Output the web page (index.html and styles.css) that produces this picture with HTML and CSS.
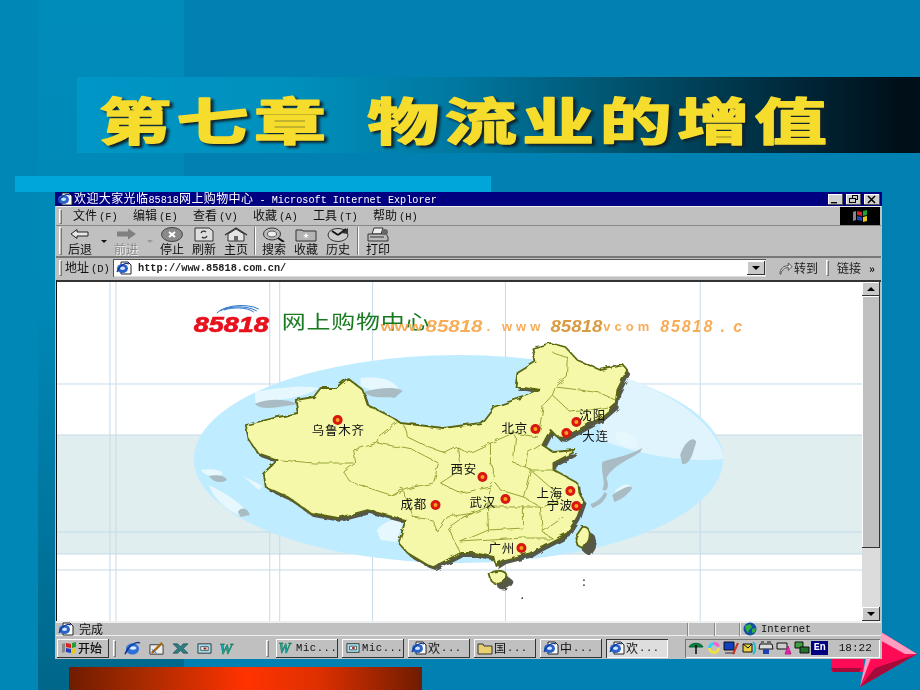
FILE: index.html
```html
<!DOCTYPE html>
<html lang="zh-CN">
<head>
<meta charset="utf-8">
<title>第七章 物流业的增值</title>
<link rel="stylesheet" href="styles.css">
</head>
<body>
<svg class="defs" width="0" height="0" aria-hidden="true">
  <defs>
    <symbol id="pageie" viewBox="0 0 16 14">
      <path d="M5 1h7l3 3v9H5z" fill="#fff" stroke="#222" stroke-width="1"/>
      <ellipse cx="6.500" cy="7.500" rx="5.500" ry="4.500" fill="#2a62c8"/>
      <ellipse cx="6.500" cy="7.200" rx="2.600" ry="1.700" fill="#cfe4ff"/>
      <path d="M1 11C3 5 9 1 13 3" fill="none" stroke="#123a90" stroke-width="1.200"/>
    </symbol>
    <symbol id="ie" viewBox="0 0 18 16">
      <ellipse cx="9" cy="8.500" rx="7" ry="6" fill="#2f6fd8"/>
      <ellipse cx="9.500" cy="7.500" rx="3.600" ry="1.800" fill="#d8ecff"/>
      <path d="M1 14C4 6 12 0 17 2" fill="none" stroke="#123a90" stroke-width="1.600"/>
    </symbol>
    <symbol id="winflag" viewBox="0 0 16 14">
      <path d="M1 3l3-1v9l-3 1z" fill="#888"/>
      <path d="M5 2l5 1v4L5 6z" fill="#d82020"/>
      <path d="M11 2l4-1v5l-4 1z" fill="#20a030"/>
      <path d="M5 7l5 1v4l-5-1z" fill="#2040c0"/>
      <path d="M11 8l4-1v5l-4 1z" fill="#e8c820"/>
    </symbol>
    <symbol id="globe" viewBox="0 0 16 14">
      <circle cx="8" cy="7" r="6.500" fill="#1050a0"/>
      <path d="M3 4l5-2 2 3-3 3-1 3-2-3zM10 7l4-1-1 4-3 1z" fill="#30b040"/>
    </symbol>
    <filter id="wiggle" x="-5%" y="-5%" width="110%" height="110%">
      <feTurbulence type="fractalNoise" baseFrequency="0.11" numOctaves="2" seed="4" result="n"/>
      <feDisplacementMap in="SourceGraphic" in2="n" scale="5"/>
    </filter>
  </defs>
</svg>

<main class="slide">
  <svg class="arrow" viewBox="0 0 90 60" aria-hidden="true">
    <path class="ar-main" d="M0 28H32V42H0z"/>
    <path class="ar-dark" d="M2 42H28L31 38H0z"/>
    <path class="ar-light" d="M29 57L35 28H42z"/>
    <path class="ar-main" d="M40 28L52 3L86 24L29 57z"/>
    <path class="ar-light" d="M50 2L86 24L74 24L45 8z"/>
    <path class="ar-dark" d="M86 24L29 57L44 38z"/>
  </svg>

  <header class="band">
    <h1 class="chapter">
      <svg class="chapter-svg" viewBox="0 0 843 76"><text class="chapter-text" transform="translate(22 63) scale(1 .7)">第七章 物流业的增值</text></svg>
    </h1>
  </header>
  <div class="strip"></div>

  <section class="win">
    <div class="titlebar">
      <svg class="ti"><use href="#pageie"/></svg>
      <span class="ttext">欢迎大家光临<span class="lat">85818</span>网上购物中心<span class="lat"> - Microsoft Internet Explorer</span></span>
      <div class="wbtns">
        <span class="wbtn"><svg viewBox="0 0 15 11"><path d="M3 8h6v1.400H3z"/></svg></span>
        <span class="wbtn"><svg viewBox="0 0 15 11"><path d="M6 1h6v5h-2v3H3V4h3zM7 2v2h3v1h1V2zM4 5v3h5V5z" fill-rule="evenodd"/></svg></span>
        <span class="wbtn wbtn-x"><svg viewBox="0 0 15 11"><path d="M4 2l7 7M11 2l-7 7" stroke="#000" stroke-width="1.600"/></svg></span>
      </div>
    </div>

    <div class="menubar">
      <span class="grip"></span>
      <nav class="menu">
        <span class="mi">文件<span class="key">(F)</span></span>
        <span class="mi">编辑<span class="key">(E)</span></span>
        <span class="mi">查看<span class="key">(V)</span></span>
        <span class="mi">收藏<span class="key">(A)</span></span>
        <span class="mi">工具<span class="key">(T)</span></span>
        <span class="mi">帮助<span class="key">(H)</span></span>
      </nav>
      <span class="flagbox"><svg class="flag"><use href="#winflag"/></svg></span>
    </div>

    <div class="toolbar">
      <span class="grip grip-tall"></span>
      <div class="tb tb-back">
        <svg viewBox="0 0 24 14"><path d="M9 2L3 6.500 9 11V8.500h11v-4H9z" fill="#e8e8e8" stroke="#222"/></svg>
        <span>后退</span>
      </div>
      <span class="drop"></span>
      <div class="tb tb-off">
        <svg viewBox="0 0 24 14"><path d="M14 1l8 5.500-8 5.500V9H3V4h11z" fill="#808080"/></svg>
        <span>前进</span>
      </div>
      <span class="drop drop-off"></span>
      <div class="tb">
        <svg viewBox="0 0 24 15"><ellipse cx="12" cy="7.500" rx="10.500" ry="7" fill="#8a8a8a" stroke="#444"/><path d="M9 5l6 5M15 5l-6 5" stroke="#fff" stroke-width="2"/></svg>
        <span>停止</span>
      </div>
      <div class="tb">
        <svg viewBox="0 0 24 15"><path d="M3 1h14l4 3v10H3z" fill="#ddd" stroke="#333"/><path d="M9 6a3 3 0 0 1 5-1M15 9a3 3 0 0 1-5 1" fill="none" stroke="#333" stroke-width="1.300"/></svg>
        <span>刷新</span>
      </div>
      <div class="tb">
        <svg viewBox="0 0 24 15"><path d="M1 8L12 1l11 7" fill="none" stroke="#333" stroke-width="1.400"/><path d="M4 7l8-5 8 5v7H4z" fill="#e4e4e4" stroke="#333"/><path d="M10 9h4v5h-4z" fill="#666"/></svg>
        <span>主页</span>
      </div>
      <span class="tsep"></span>
      <div class="tb">
        <svg viewBox="0 0 24 15"><ellipse cx="10" cy="7" rx="8.500" ry="6" fill="#bbb" stroke="#333"/><ellipse cx="10" cy="7" rx="4.500" ry="3" fill="#eee" stroke="#555"/><path d="M16 11l6 4" stroke="#111" stroke-width="2"/></svg>
        <span>搜索</span>
      </div>
      <div class="tb">
        <svg viewBox="0 0 24 15"><path d="M2 3h6l1 1h13v10H2z" fill="#b4b4b4" stroke="#333"/><path d="M12 6l1 2h2l-2 1.300.700 2-1.700-1.200-1.700 1.200.700-2-2-1.300h2z" fill="#fff"/></svg>
        <span>收藏</span>
      </div>
      <div class="tb">
        <svg viewBox="0 0 24 15"><ellipse cx="12" cy="8" rx="10" ry="6.500" fill="#ccc" stroke="#333"/><path d="M12 8L20 2M12 8L6 4" stroke="#111" stroke-width="1.800"/><path d="M15 6l7-5v6z" fill="#333"/></svg>
        <span>历史</span>
      </div>
      <span class="tsep tsep-wide"></span>
      <div class="tb">
        <svg viewBox="0 0 24 15"><path d="M8 1h9l-2 6H6z" fill="#eee" stroke="#333"/><path d="M2 7h18l2 3v4H2z" fill="#bbb" stroke="#333"/><path d="M4 10h14" stroke="#333"/><circle cx="19" cy="5" r="3" fill="#666"/></svg>
        <span>打印</span>
      </div>
    </div>

    <div class="addr">
      <span class="grip grip-addr"></span>
      <span class="addr-label">地址<span class="key">(D)</span></span>
      <div class="field">
        <svg class="ti"><use href="#pageie"/></svg>
        <span class="url">http://www.85818.com.cn/</span>
        <span class="combo"><i class="tri"></i></span>
      </div>
      <span class="go">
        <svg viewBox="0 0 16 14"><path d="M2 13C2 7 6 4 11 4V1l4 4-4 4V6C7 6 4 8 3 13z" fill="#ddd" stroke="#333" stroke-width=".8"/></svg>
        <span>转到</span>
      </span>
      <span class="grip grip-addr"></span>
      <span class="links">链接</span>
      <span class="more">»</span>
    </div>

    <div class="content">
      <div class="page">
        <svg class="map" viewBox="56 282 806 339" preserveAspectRatio="none" role="img" aria-label="全国网点地图">
          <rect class="stripe" x="56" y="435" width="806" height="119"/>
          <g class="grid">
            <path d="M109 282V621M115 282V621M269 282V621M279 282V621M372 282V621M505 282V621M700 282V621"/>
            <path d="M56 384H862M56 435H862M56 532H862M56 554H862M56 570H862"/>
          </g>
          <ellipse class="sea" cx="458" cy="459" rx="265" ry="104"/>
          <path class="sea-pale" d="M600 372C670 385 722 430 723 459C690 462 650 458 600 440z"/>
          <g class="cloud">
            <path d="M254 392C275 388 300 385 318 388C310 395 285 400 255 403zM360 378C385 376 395 382 400 392C392 398 375 392 360 386z"/>
            <path d="M200 470C210 468 222 470 222 474C215 478 205 477 200 470zM208 485C222 492 245 505 248 515C240 520 215 505 208 485zM242 476L262 486L258 490z"/>
            <path d="M376 530C385 520 395 518 402 522L396 542L380 540z"/>
            <path d="M615 432C630 430 640 440 636 448C625 450 615 442 615 432zM615 490C625 482 635 482 628 494C620 500 615 498 615 490z"/>
          </g>
          <g class="land">
            <path d="M254 404C268 398 285 399 298 404L285 406C270 408 262 410 254 404z"/>
            <path d="M363 392C378 388 396 386 402 391L394 398C385 396 372 400 363 392z"/>
            <path d="M208 476C215 474 226 476 226 480C220 484 212 482 208 476zM237 512C242 505 248 510 249 515L240 517z"/>
            <path d="M602 462C612 458 628 456 642 448L640 452C628 460 612 466 606 478C610 488 606 492 602 490C606 482 600 472 602 462zM604 492L607 494C604 502 598 506 592 508L590 504C596 502 602 498 604 492z"/>
            <path d="M612 495C622 488 630 484 632 488C628 495 620 500 614 502z"/>
            <path d="M680 455C685 440 694 436 696 442C692 455 690 465 682 464z"/>
          </g>

          <g class="china">
            <path class="cn-shadow" d="M347 378L362 390L367 405L393 418L400 423L443 428L480 423L483 420L493 407L523 397L540 390L523 387L515 387L517 373L535 362L532 348L550 343L565 347L577 360L600 370L623 365L627 370L617 390L615 405L600 418L583 427L563 438L557 437L550 430L542 445L553 452L575 450L572 453L553 463L553 470L577 483L578 492L583 500L577 517L567 533L540 547L530 553L503 560L495 565L493 557L473 553L460 553L433 567L427 565L407 553L398 543L405 520L393 517L367 510L337 518L310 513L287 497L265 487L263 473L277 460L257 453L248 440L245 425L273 418L297 413L295 400L313 397L320 388L335 388z"/>
            <path class="cn" d="M347 378L362 390L367 405L393 418L400 423L443 428L480 423L483 420L493 407L523 397L540 390L523 387L515 387L517 373L535 362L532 348L550 343L565 347L577 360L600 370L623 365L627 370L617 390L615 405L600 418L583 427L563 438L557 437L550 430L542 445L553 452L575 450L572 453L553 463L553 470L577 483L578 492L583 500L577 517L567 533L540 547L530 553L503 560L495 565L493 557L473 553L460 553L433 567L427 565L407 553L398 543L405 520L393 517L367 510L337 518L310 513L287 497L265 487L263 473L277 460L257 453L248 440L245 425L273 418L297 413L295 400L313 397L320 388L335 388z"/>
            <path class="cn-shadow" d="M585 529C592 528 594 535 591 544L586 552L580 548L578 540z"/>
            <path class="cn" d="M582 527C589 526 591 533 588 541L583 549L577 545L575 537z"/>
            <path class="cn-shadow" d="M492 575C498 570 508 572 510 578C508 585 498 588 494 583z"/>
            <path class="cn" d="M489 574C495 569 505 570 507 576C505 583 495 586 491 581z"/>
            <g class="prov">
              <path d="M280 460L313 463L353 463M397 422L377 437L377 443L353 450L355 463L343 472L350 482L390 495L402 488L412 517L432 520L437 532L447 517L473 513"/>
              <path d="M377 443L413 450L438 463L433 483L413 487L390 495M403 425L407 437L427 447L445 453L457 447L468 453L490 443L513 433L537 437L540 423L543 405L552 395L555 387L567 377L568 358L553 353"/>
              <path d="M555 387L580 390L600 393L615 400M552 395L570 412L590 410L607 407"/>
              <path d="M457 447L460 470L440 483L460 493L490 487L495 477L490 463L490 443M495 483L500 490L523 497L530 470L525 467L527 453L540 445M513 433L515 437L513 463L525 467"/>
              <path d="M530 470L553 470M530 470L553 490L557 503L540 507L523 497M490 487L487 507L523 507L540 507L542 532L563 517M487 507L488 530L523 528L523 507M542 532L552 538M460 542L523 538L552 538M447 528L463 517L487 507M488 530L460 542M447 528L460 553M473 513L463 517"/>
            </g>
          </g>

          <g class="logo">
            <path class="arcs" d="M216 313C224 305 246 303 258 309M219 311C228 306 246 305 256 311M223 310C232 307 246 307 253 312"/>
            <text class="logo-num" x="193" y="332" textLength="75" lengthAdjust="spacingAndGlyphs">85818</text>
            <text class="logo-cn" transform="translate(281 329) scale(1 .8)">网上购物中心</text>
          </g>
          <g class="marquee">
            <text x="380" y="331" textLength="42" lengthAdjust="spacingAndGlyphs">www</text>
            <text class="mq-big" x="425" y="332" textLength="57" lengthAdjust="spacingAndGlyphs">85818</text>
            <text x="486" y="331" textLength="54">. www</text>
            <text class="mq-big mq-dark" x="550" y="332" textLength="52" lengthAdjust="spacingAndGlyphs">85818</text>
            <text x="603" y="331" textLength="46">vcom</text>
            <text class="mq-big" x="660" y="332" textLength="82">85818 . c</text>
          </g>
          <g class="cities">
            <g class="dot"><circle cx="337" cy="420" r="5"/><circle class="core" cx="337" cy="420" r="2"/></g>
            <g class="dot"><circle cx="535" cy="429" r="5"/><circle class="core" cx="535" cy="429" r="2"/></g>
            <g class="dot"><circle cx="576" cy="422" r="5"/><circle class="core" cx="576" cy="422" r="2"/></g>
            <g class="dot"><circle cx="566" cy="433" r="5"/><circle class="core" cx="566" cy="433" r="2"/></g>
            <g class="dot"><circle cx="482" cy="477" r="5"/><circle class="core" cx="482" cy="477" r="2"/></g>
            <g class="dot"><circle cx="435" cy="505" r="5"/><circle class="core" cx="435" cy="505" r="2"/></g>
            <g class="dot"><circle cx="505" cy="499" r="5"/><circle class="core" cx="505" cy="499" r="2"/></g>
            <g class="dot"><circle cx="570" cy="491" r="5"/><circle class="core" cx="570" cy="491" r="2"/></g>
            <g class="dot"><circle cx="576" cy="506" r="5"/><circle class="core" cx="576" cy="506" r="2"/></g>
            <g class="dot"><circle cx="521" cy="548" r="5"/><circle class="core" cx="521" cy="548" r="2"/></g>
            <text x="311" y="435">乌鲁木齐</text>
            <text x="501" y="433">北京</text>
            <text x="579" y="420">沈阳</text>
            <text x="582" y="441">大连</text>
            <text x="450" y="474">西安</text>
            <text x="400" y="509">成都</text>
            <text x="469" y="507">武汉</text>
            <text x="536" y="498">上海</text>
            <text x="546" y="510">宁波</text>
            <text x="488" y="553">广州</text>
            <text x="582" y="586">:</text>
            <text x="520" y="599">.</text>
          </g>
        </svg>
      </div>
      <div class="scroll">
        <span class="sbtn"><i class="tri tri-up"></i></span>
        <span class="thumb"></span>
        <span class="track"></span>
        <span class="sbtn"><i class="tri"></i></span>
      </div>
    </div>

    <div class="status">
      <svg class="ti"><use href="#pageie"/></svg>
      <span class="done">完成</span>
      <span class="spanel spanel-a"></span>
      <span class="spanel spanel-b"></span>
      <span class="spanel spanel-c">
        <svg class="ti"><use href="#globe"/></svg>
        <span class="lat">Internet</span>
      </span>
    </div>

    <div class="taskbar">
      <span class="tbtn start"><svg class="ti"><use href="#winflag"/></svg>开始</span>
      <span class="grip grip-task"></span>
      <div class="quick">
        <svg class="qi"><use href="#ie"/></svg>
        <svg class="qi" viewBox="0 0 18 16"><path d="M2 4h14v10H2z" fill="#eee" stroke="#333"/><path d="M4 13L15 2" stroke="#a86c10" stroke-width="2.500"/><path d="M4 9l5 4" stroke="#2060b0"/></svg>
        <svg class="qi" viewBox="0 0 18 16"><path d="M1 3h5l3 3 3-3h5l-5 5 5 5h-5l-3-3-3 3H1l5-5z" fill="#2d7f80" stroke="#0d3f50" stroke-width=".6"/></svg>
        <svg class="qi" viewBox="0 0 18 16"><path d="M2 3h14v10H2z" fill="#9fdcec" stroke="#333"/><path d="M5 6h8v4H5z" fill="#e6f4f8" stroke="#555"/><path d="M8 7h3v2H8z" fill="#a01818"/></svg>
        <svg class="qi" viewBox="0 0 18 16"><text class="w-mark" x="-1" y="14">W</text></svg>
      </div>
      <span class="grip grip-task grip-b"></span>
      <div class="tasks">
        <span class="tbtn task"><svg class="ti" viewBox="0 0 18 16"><text class="w-mark" x="-1" y="14">W</text></svg><span class="lat">Mic...</span></span>
        <span class="tbtn task"><svg class="ti" viewBox="0 0 18 16"><path d="M2 3h14v10H2z" fill="#9fdcec" stroke="#333"/><path d="M5 6h8v4H5z" fill="#e6f4f8" stroke="#555"/><path d="M8 7h3v2H8z" fill="#a01818"/></svg><span class="lat">Mic...</span></span>
        <span class="tbtn task"><svg class="ti"><use href="#pageie"/></svg>欢<span class="lat">...</span></span>
        <span class="tbtn task"><svg class="ti" viewBox="0 0 16 14"><path d="M1 3h5l1 2h8v8H1z" fill="#e8d070" stroke="#333"/></svg>国<span class="lat">...</span></span>
        <span class="tbtn task"><svg class="ti"><use href="#pageie"/></svg>中<span class="lat">...</span></span>
        <span class="tbtn task task-on"><svg class="ti"><use href="#pageie"/></svg>欢<span class="lat">...</span></span>
      </div>
      <div class="tray">
        <svg class="tri-i" viewBox="0 0 16 14"><path d="M1 6C3 1 13 1 15 6z" fill="#108040" stroke="#063"/><path d="M8 4v9" stroke="#111" stroke-width="1.600"/></svg>
        <svg class="tri-i" viewBox="0 0 16 14"><path d="M8 1a6 6 0 0 1 6 4l-3 1a3 3 0 0 0-3-2z" fill="#f060d0"/><path d="M14 7a6 6 0 0 1-6 6v-3a3 3 0 0 0 3-3z" fill="#f0e040"/><path d="M8 13a6 6 0 0 1-6-6h3a3 3 0 0 0 3 3z" fill="#f0e040"/><path d="M2 7a6 6 0 0 1 6-6v3a3 3 0 0 0-3 3z" fill="#30d0f0"/></svg>
        <svg class="tri-i" viewBox="0 0 16 14"><path d="M1 1h10v8H1z" fill="#1040c0" stroke="#111"/><path d="M2 11h10v2H2z" fill="#777"/><path d="M10 13L15 2" stroke="#d03020" stroke-width="2"/></svg>
        <svg class="tri-i" viewBox="0 0 16 14"><path d="M2 3h9v8H2z" fill="#e8d040" stroke="#111"/><path d="M2 3l5 4 4-4" fill="none" stroke="#111"/><path d="M12 1c3 3 3 9 0 12" fill="none" stroke="#20c0d0" stroke-width="2"/></svg>
        <svg class="tri-i" viewBox="0 0 16 14"><path d="M2 3h12l1 5H1z" fill="#ddd" stroke="#111"/><path d="M5 8h6v5H5z" fill="#2040b0"/><path d="M3 1h3M9 1h4" stroke="#111"/></svg>
        <svg class="tri-i" viewBox="0 0 16 14"><path d="M1 2h10v6H1z" fill="#ccc" stroke="#111"/><path d="M9 13l3-8 3 8zM10.500 11h3" fill="#e030b0" stroke="#c01890"/></svg>
        <svg class="tri-i" viewBox="0 0 16 14"><path d="M1 1h8v6H1z" fill="#40a040" stroke="#111"/><path d="M6 6h9v6H6z" fill="#207030" stroke="#111"/></svg>
        <span class="en">En</span>
        <span class="clock">18:22</span>
      </div>
    </div>
  </section>

  <div class="redbar"></div>
</main>
</body>
</html>
```

FILE: styles.css
```css
* { box-sizing: border-box; }
html, body { margin: 0; padding: 0; }
body { width: 920px; height: 690px; overflow: hidden; font-family: "Noto Sans CJK SC", "Liberation Sans", sans-serif; }
.defs { display: block; position: absolute; }

.slide {
  position: relative;
  width: 920px;
  height: 690px;
  overflow: hidden;
  padding-top: 77px;
  filter: blur(.4px);
  background:
    linear-gradient(90deg, #0087b6 0 38px, transparent 38px),
    linear-gradient(180deg, #008cbb 0, #0087b5 45%, #00769f 75%, #00668a 100%) 38px 0 / 146px 100% no-repeat,
    #0081b2;
}

.arrow { position: absolute; left: 831px; top: 630px; width: 90px; height: 60px; }
.ar-main { fill: #ff0a55; }
.ar-dark { fill: #a50a38; }
.ar-light { fill: #ff9ec0; }

.band {
  height: 76px;
  margin-left: 77px;
  background: linear-gradient(90deg, #0096c6 0, #0090bd 25%, #0078a0 45%, #005a78 61%, #00283a 85%, #000f18 98%, #000f18 100%);
}
.chapter { margin: 0; height: 76px; }
.chapter-svg { display: block; width: 843px; height: 76px; overflow: visible; }
.chapter-text {
  font-size: 72px;
  font-weight: 700;
  letter-spacing: 5.500px;
  word-spacing: 14px;
  fill: #f6dc2c;
  stroke: #f6dc2c;
  stroke-width: 2.500px;
  stroke-linejoin: round;
  filter: drop-shadow(3px 3px 1.500px #10222a);
}

.strip { height: 16px; width: 476px; margin: 23px 0 0 15px; background: #00a6d9; }

.win {
  position: relative;
  display: flex;
  flex-direction: column;
  width: 827px;
  height: 467px;
  margin-left: 55px;
  padding: 0 1px;
  background: #c0c0c0;
  color: #111;
  font-size: 12px;
  line-height: 14px;
}
.lat { font-family: "Liberation Mono", monospace; font-size: 10.500px; font-weight: 700; }
.key { font-family: "Liberation Mono", monospace; font-size: 10.500px; margin-left: 2px; }
.ti { width: 16px; height: 14px; flex: none; }

.titlebar {
  height: 14px;
  margin: 0 -1px;
  padding: 0 2px;
  flex: none;
  display: flex;
  align-items: center;
  gap: 1px;
  background: #000080;
  color: #fff;
}
.ttext { white-space: pre; line-height: 14px; letter-spacing: .400px; }
.titlebar .lat { font-weight: 400; font-size: 10.200px; letter-spacing: 0; }
.wbtns { margin-left: auto; display: flex; gap: 3px; }
.wbtn {
  width: 15px;
  height: 11px;
  display: block;
  background: #d0d0d0;
  box-shadow: inset -1px -1px #555, inset 1px 1px #fff;
}
.wbtn svg { display: block; width: 15px; height: 11px; }
.wbtn-x { width: 16px; }

.menubar { height: 20px; flex: none; display: flex; align-items: center; border-top: 1px solid #eee; border-bottom: 1px solid #888; padding-left: 3px; }
.grip { width: 3px; height: 15px; flex: none; border: 1px solid #777; border-left-color: #fff; border-top-color: #fff; }
.grip-tall { height: 28px; }
.grip-addr { height: 16px; }
.grip-task { height: 17px; margin-left: 4px; }
.grip-b { margin-left: 29px; }
.menu { display: flex; margin-left: 11px; }
.mi { width: 60px; white-space: nowrap; }
.flagbox { margin-left: auto; width: 40px; height: 18px; background: #000; display: flex; align-items: center; justify-content: center; margin-right: 1px; }
.flag { width: 16px; height: 14px; }

.toolbar { height: 32px; flex: none; display: flex; align-items: center; padding-left: 3px; border-bottom: 2px solid #777; }
.tb { display: flex; flex-direction: column; align-items: center; flex: none; width: 32px; line-height: 13px; margin-top: -1px; }
.tb svg { width: 24px; height: 15px; display: block; }
.tb-back { margin-left: 2px; }
.tb-off { color: #8a8a8a; text-shadow: 1px 1px #eee; }
.drop { width: 0; height: 0; flex: none; border: 3px solid transparent; border-top: 3px solid #111; margin: 3px 3px 0 5px; }
.drop-off { border-top-color: #999; }
.tsep { width: 2px; height: 28px; flex: none; margin: 0 2px; border-left: 1px solid #777; border-right: 1px solid #fff; }
.tsep-wide { margin: 0 3px; }

.addr { height: 20px; flex: none; display: flex; align-items: center; padding-left: 3px; }
.addr-label { margin-left: 3px; width: 48px; white-space: nowrap; }
.field { flex: none; width: 653px; height: 18px; display: flex; align-items: center; gap: 6px; padding-left: 3px; background: #fff; box-shadow: inset 1px 1px #555, inset -1px -1px #ddd; }
.url { font-family: "Liberation Mono", monospace; font-size: 10.300px; font-weight: 700; color: #222; white-space: pre; }
.combo, .sbtn { display: flex; align-items: center; justify-content: center; background: #c8c8c8; box-shadow: inset -1px -1px #333, inset 1px 1px #fff; }
.combo { margin-left: auto; width: 18px; height: 14px; margin-right: 1px; }
.tri { display: block; width: 0; height: 0; border: 4px solid transparent; border-top: 4px solid #000; border-bottom-width: 0; }
.tri-up { border-top-width: 0; border-bottom: 4px solid #000; }
.go { display: flex; align-items: center; margin: 0 8px 0 12px; gap: 1px; white-space: nowrap; color: #222; }
.go svg { width: 15px; height: 13px; }
.links { margin-left: 8px; white-space: nowrap; color: #222; }
.more { margin-left: 8px; font-size: 11px; font-weight: 700; line-height: 12px; }

.content { flex: none; height: 341px; margin-top: 2px; display: flex; padding-right: 1px; border-top: 2px solid #333; border-left: 1px solid #111; }
.page { flex: 1; min-width: 0; background: #fff; }
.map { display: block; width: 100%; height: 100%; }
.stripe { fill: #e0eef0; }
.grid path { fill: none; stroke: #c6dbe8; stroke-width: 1; }
.sea { fill: #c0ecff; }
.sea-pale { fill: #dff4fd; }
.cloud path { fill: #e6f7fe; }
.land path { fill: #a9bcc4; }
.china { filter: url(#wiggle); }
.cn { fill: #f4f8a8; stroke: #5a6610; stroke-width: 1.800; stroke-linejoin: round; }
.cn-shadow { fill: #55584a; transform: translate(3px, 4px); }
.prov path { fill: none; stroke: #96a436; stroke-width: 1; stroke-linejoin: round; }
.arcs { fill: none; stroke: #2a74c8; stroke-width: 1; }
.logo-num { font-family: "Liberation Sans", sans-serif; font-size: 22px; font-weight: 700; font-style: italic; fill: #e8101c; stroke: #e8101c; stroke-width: .7; }
.logo-cn { font-size: 24px; letter-spacing: .800px; fill: #177a20; }
.marquee text { font-family: "Liberation Sans", sans-serif; font-size: 13px; font-weight: 700; fill: #f7ac58; }
.marquee .mq-big { font-size: 16px; font-style: italic; }
.marquee .mq-dark { fill: #d99a40; }
.dot circle { fill: #d81810; }
.dot .core { fill: #f8a020; }
.cities text { font-size: 12.500px; letter-spacing: .800px; fill: #111; }

.scroll { width: 18px; flex: none; display: flex; flex-direction: column; }
.sbtn { height: 14px; flex: none; }
.thumb { height: 252px; flex: none; background: #c0c0c0; box-shadow: inset -1px -1px #333, inset 1px 1px #fff; }
.track { flex: 1; background: #dcdcdc; }

.status { height: 15px; flex: none; display: flex; align-items: center; padding-left: 2px; border-top: 2px solid #eee; border-bottom: 1px solid #eee; }
.done { margin-left: 5px; width: 608px; }
.spanel { height: 13px; flex: none; border-left: 1px solid #888; box-shadow: inset 1px 0 #eee; }
.spanel-a { width: 27px; }
.spanel-b { width: 25px; }
.spanel-c { flex: 1; display: flex; align-items: center; gap: 3px; padding-left: 2px; }
.spanel-c .lat { font-weight: 400; }

.taskbar { height: 23px; flex: none; margin: 0 -1px; padding: 2px 2px 1px; display: flex; align-items: center; }
.tbtn { display: flex; align-items: center; height: 19px; flex: none; background: #c0c0c0; box-shadow: inset -1px -1px #333, inset 1px 1px #fff; white-space: nowrap; }
.start { width: 52px; padding-left: 4px; gap: 1px; font-weight: 500; }
.quick { display: flex; margin-left: 8px; gap: 7px; align-items: center; }
.qi { width: 17px; height: 15px; flex: none; }
.w-mark { font-family: "Liberation Serif", serif; font-size: 16px; font-weight: 700; font-style: italic; fill: #10a8b0; stroke: #063; stroke-width: .4; }
.tasks { display: flex; gap: 4px; margin-left: 7px; }
.task { width: 62px; gap: 1px; padding-left: 3px; }
.task .lat { letter-spacing: .600px; font-weight: 400; }
.task-on { background: #dedede; box-shadow: inset 1px 1px #333, inset -1px -1px #fff; }
.tray { margin-left: 17px; flex: 1; height: 19px; display: flex; align-items: center; gap: 1.600px; padding: 0 2px 0 3px; box-shadow: inset 1px 1px #777, inset -1px -1px #fff; }
.tri-i { width: 16px; height: 14px; flex: none; }
.en { width: 17px; height: 14px; background: #000080; color: #fff; font-family: "Liberation Mono", monospace; font-size: 10px; font-weight: 700; text-align: center; }
.clock { margin-left: 9px; font-family: "Liberation Mono", monospace; font-size: 11px; }

.redbar {
  height: 23px;
  width: 353px;
  margin: 8px 0 0 69px;
  background: linear-gradient(90deg, #6f1c00 0, #a52a00 20%, #ff3300 50%, #e03000 70%, #6f1c00 100%);
}
```
